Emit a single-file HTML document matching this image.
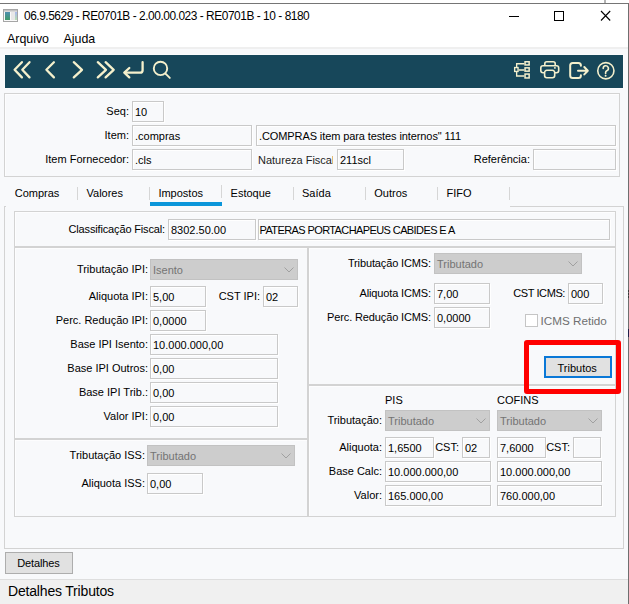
<!DOCTYPE html>
<html><head><meta charset="utf-8"><style>
html,body{margin:0;padding:0;width:629px;height:604px;overflow:hidden;background:#fff;}
body{position:relative;font-family:"Liberation Sans",sans-serif;}
body>div,body>svg{position:absolute;}
.t{white-space:nowrap;}
</style></head><body>
<div style="left:0px;top:0px;width:629px;height:604px;background:#fff;"></div>
<div style="left:604px;top:0px;width:2px;height:3px;background:#b4b4b4;"></div>
<div style="left:0px;top:3px;width:629px;height:1px;background:#757575;"></div>
<div style="left:628px;top:3px;width:1px;height:601px;background:#6f6f6f;"></div>
<svg style="left:3px;top:9px" width="15" height="13" viewBox="0 0 15 13"><defs><linearGradient id="g1" x1="0" y1="0" x2="0" y2="1"><stop offset="0" stop-color="#4f8fb0"/><stop offset="1" stop-color="#3f9a6a"/></linearGradient><linearGradient id="g2" x1="0" y1="0" x2="0" y2="1"><stop offset="0" stop-color="#a9b8f0"/><stop offset="1" stop-color="#b8e0b0"/></linearGradient></defs><rect x="0.5" y="0.5" width="14" height="12" fill="#fafafa" stroke="#a6a6a6"/><rect x="1" y="1" width="13" height="1.6" fill="#c4c4c4"/><rect x="2" y="3" width="5" height="8" fill="url(#g1)"/><rect x="8" y="3" width="4" height="8" fill="#e8e8e8"/><rect x="12" y="3" width="2" height="8" fill="url(#g2)"/></svg>
<div class="t" style="left:24px;top:10.04px;font-size:11.9px;line-height:13.68px;color:#000;letter-spacing:-0.45px;">06.9.5629 - RE0701B - 2.00.00.023 - RE0701B - 10 - 8180</div>
<div style="left:509px;top:16px;width:10px;height:1px;background:#000;"></div>
<div style="left:554px;top:11px;width:10px;height:10px;border:1px solid #000;box-sizing:border-box;"></div>
<svg style="left:600px;top:10px" width="12" height="12" viewBox="0 0 12 12"><path d="M1 1 L10.2 10.5 M10.2 1 L1 10.5" stroke="#000" stroke-width="1.1"/></svg>
<div class="t" style="left:7px;top:31.57px;font-size:12.4px;line-height:14.26px;color:#000;">Arquivo</div>
<div class="t" style="left:63.5px;top:31.57px;font-size:12.4px;line-height:14.26px;color:#000;">Ajuda</div>
<div style="left:0px;top:47px;width:628px;height:2px;background:#efefef;"></div>
<div style="left:0px;top:49px;width:628px;height:530px;background:#f8f9fb;"></div>
<div style="left:4px;top:54px;width:620px;height:35px;background:#fbfcfd;"></div>
<div style="left:5px;top:55px;width:618px;height:33px;background:#17475a;"></div>
<svg style="left:0;top:0" width="629" height="100" viewBox="0 0 629 100">
<g fill="none" stroke="#f5f0cc" stroke-width="2.3" stroke-linecap="round" stroke-linejoin="round">
<path d="M21.9 62.2 L14.6 69.8 L21.9 77.4"/>
<path d="M29.5 62.2 L22.3 69.8 L29.5 77.4"/>
<path d="M53.9 62.2 L46.4 69.8 L53.9 77.4"/>
<path d="M73.8 62.2 L82 69.8 L73.8 77.4"/>
<path d="M97.8 62.2 L106 69.8 L97.8 77.4"/>
<path d="M105.6 62.2 L113.7 69.8 L105.6 77.4"/>
</g>
<g fill="none" stroke="#f5f0cc" stroke-width="2.3" stroke-linecap="round" stroke-linejoin="round">
<path d="M142.6 62.2 V70.2 a2.5 2.5 0 0 1 -2.5 2.5 H125"/>
<path d="M129.3 68 L124.3 72.7 L129.3 77.4"/>
</g>
<g fill="none" stroke="#f5f0cc" stroke-width="1.9" stroke-linecap="round">
<circle cx="160.5" cy="68.4" r="6.7"/>
<path d="M165.5 73.6 L169.8 77.9"/>
</g>
<g fill="none" stroke="#f5f0cc" stroke-width="1.35">
<rect x="514.65" y="67.55" width="3.4" height="3.9"/>
<rect x="525.05" y="61.75" width="4.1" height="3.2" stroke-width="1.5"/>
<rect x="525.05" y="67.85" width="4.1" height="3.3" stroke-width="1.5"/>
<rect x="525.05" y="74.05" width="4.1" height="3.9" stroke-width="1.5"/>
<path d="M516.65 66.9 V63.7 H524.3 M516.65 72.1 V76 H524.3 M518.7 70 H524.3"/>
</g>
<g fill="none" stroke="#f5f0cc" stroke-width="1.6" stroke-linejoin="round">
<path d="M544.8 65.8 V63.8 a2 2 0 0 1 2 -2 H553.2 a2 2 0 0 1 2 2 V65.8"/>
<path d="M544.6 72.7 H543 a2.2 2.2 0 0 1 -2.2 -2.2 V68 a2.2 2.2 0 0 1 2.2 -2.2 H556.5 a2.2 2.2 0 0 1 2.2 2.2 V70.5 a2.2 2.2 0 0 1 -2.2 2.2 H554.7"/>
<path d="M546.8 70.3 H552.5 a2.2 2.2 0 0 1 2.2 2.2 V75.5 a2.2 2.2 0 0 1 -2.2 2.2 H546.8 a2.2 2.2 0 0 1 -2.2 -2.2 V72.5 a2.2 2.2 0 0 1 2.2 -2.2 Z"/>
</g>
<rect x="554.1" y="67.1" width="1.6" height="1.6" fill="#f5f0cc"/>
<g fill="none" stroke="#f5f0cc" stroke-width="2" stroke-linecap="round" stroke-linejoin="round">
<path d="M580.9 65.8 V65.5 a2.5 2.5 0 0 0 -2.5 -2.5 H572.7 a2.5 2.5 0 0 0 -2.5 2.5 V75.5 a2.5 2.5 0 0 0 2.5 2.5 H578.4 a2.5 2.5 0 0 0 2.5 -2.5 V75.2"/>
<path d="M578 70.7 H587.3 M584.3 67 L587.8 70.7 L584.3 74.4"/>
</g>
<g fill="none" stroke="#f5f0cc" stroke-width="1.6" stroke-linecap="round">
<circle cx="605.85" cy="70.75" r="8.1"/>
<path d="M603.2 68.4 a2.6 2.6 0 1 1 3.6 2.4 c-0.8 0.4 -1.2 0.9 -1.2 1.7 v0.9"/>
</g>
<circle cx="605.6" cy="75.7" r="1" fill="#f5f0cc"/>
</svg>
<div style="left:4px;top:93px;width:616px;height:84px;border:1px solid #d3d3d3;box-sizing:border-box;box-shadow:inset 1px 1px 0 #fdfdfe;"></div>
<div class="t" style="right:500px;top:104.86px;font-size:11px;line-height:12.65px;color:#000;text-align:right;">Seq:</div>
<div style="left:132px;top:101px;width:32px;height:21px;border:1px solid #c9c9c9;box-sizing:border-box;background:#f8f9fb;box-shadow:inset 1px 1px 0 #fff, 1px 1px 0 #fff;"></div>
<div class="t" style="left:135px;top:105.86px;font-size:11px;line-height:12.65px;color:#000;">10</div>
<div class="t" style="right:500px;top:128.86px;font-size:11px;line-height:12.65px;color:#000;text-align:right;">Item:</div>
<div style="left:132px;top:125px;width:120px;height:21px;border:1px solid #c9c9c9;box-sizing:border-box;background:#f8f9fb;box-shadow:inset 1px 1px 0 #fff, 1px 1px 0 #fff;"></div>
<div class="t" style="left:135px;top:129.86px;font-size:11px;line-height:12.65px;color:#000;">.compras</div>
<div style="left:256px;top:125px;width:360px;height:21px;border:1px solid #c9c9c9;box-sizing:border-box;background:#f8f9fb;box-shadow:inset 1px 1px 0 #fff, 1px 1px 0 #fff;"></div>
<div class="t" style="left:259px;top:129.86px;font-size:11px;line-height:12.65px;color:#000;letter-spacing:-0.1px;">.COMPRAS item para testes internos" 111</div>
<div class="t" style="right:500px;top:152.86px;font-size:11px;line-height:12.65px;color:#000;text-align:right;">Item Fornecedor:</div>
<div style="left:132px;top:149px;width:120px;height:21px;border:1px solid #c9c9c9;box-sizing:border-box;background:#f8f9fb;box-shadow:inset 1px 1px 0 #fff, 1px 1px 0 #fff;"></div>
<div class="t" style="left:135px;top:153.86px;font-size:11px;line-height:12.65px;color:#000;">.cls</div>
<div class="t" style="left:258px;top:150px;width:75px;height:19px;overflow:hidden;font-size:11px;line-height:20px;color:#1e1e1e;white-space:nowrap">Natureza Fiscal:</div>
<div style="left:337px;top:149px;width:67px;height:21px;border:1px solid #c9c9c9;box-sizing:border-box;background:#f8f9fb;box-shadow:inset 1px 1px 0 #fff, 1px 1px 0 #fff;"></div>
<div class="t" style="left:340px;top:153.86px;font-size:11px;line-height:12.65px;color:#000;">211scl</div>
<div class="t" style="right:99px;top:152.86px;font-size:11px;line-height:12.65px;color:#000;text-align:right;">Referência:</div>
<div style="left:533px;top:149px;width:83px;height:21px;border:1px solid #c9c9c9;box-sizing:border-box;background:#f8f9fb;box-shadow:inset 1px 1px 0 #fff, 1px 1px 0 #fff;"></div>
<div class="t" style="left:14.7px;top:186.86px;font-size:11px;line-height:12.65px;color:#000;">Compras</div>
<div class="t" style="left:86.5px;top:186.86px;font-size:11px;line-height:12.65px;color:#000;">Valores</div>
<div class="t" style="left:158.4px;top:186.86px;font-size:11px;line-height:12.65px;color:#000;">Impostos</div>
<div class="t" style="left:230.6px;top:186.86px;font-size:11px;line-height:12.65px;color:#000;">Estoque</div>
<div class="t" style="left:302px;top:186.86px;font-size:11px;line-height:12.65px;color:#000;">Saída</div>
<div class="t" style="left:374.3px;top:186.86px;font-size:11px;line-height:12.65px;color:#000;">Outros</div>
<div class="t" style="left:446.5px;top:186.86px;font-size:11px;line-height:12.65px;color:#000;">FIFO</div>
<div style="left:77px;top:187px;width:1px;height:13px;background:#d6d6d6;"></div>
<div style="left:149px;top:187px;width:1px;height:13px;background:#d6d6d6;"></div>
<div style="left:293px;top:187px;width:1px;height:13px;background:#d6d6d6;"></div>
<div style="left:365px;top:187px;width:1px;height:13px;background:#d6d6d6;"></div>
<div style="left:437px;top:187px;width:1px;height:13px;background:#d6d6d6;"></div>
<div style="left:509px;top:187px;width:1px;height:13px;background:#d6d6d6;"></div>
<div style="left:221px;top:185px;width:1px;height:13px;background:#d6d6d6;"></div>
<div style="left:150px;top:202px;width:72px;height:4px;background:#0b96da;"></div>
<div style="left:4px;top:206px;width:620px;height:343px;border:1px solid #d3d3d3;border-top:none;box-sizing:border-box;"></div>
<div style="left:4px;top:206px;width:2px;height:1px;background:#d3d3d3;"></div>
<div style="left:510px;top:206px;width:114px;height:1px;background:#d3d3d3;"></div>
<div style="left:14px;top:211px;width:602px;height:36px;border:1px solid #d3d3d3;box-sizing:border-box;box-shadow:inset 1px 1px 0 #fdfdfe;"></div>
<div class="t" style="right:464px;top:222.86px;font-size:11px;line-height:12.65px;color:#000;text-align:right;letter-spacing:-0.15px;">Classificação Fiscal:</div>
<div style="left:168px;top:219px;width:88px;height:21px;border:1px solid #c9c9c9;box-sizing:border-box;background:#f8f9fb;box-shadow:inset 1px 1px 0 #fff, 1px 1px 0 #fff;"></div>
<div class="t" style="left:171px;top:223.86px;font-size:11px;line-height:12.65px;color:#000;">8302.50.00</div>
<div style="left:258px;top:219px;width:352px;height:21px;border:1px solid #c9c9c9;box-sizing:border-box;background:#f8f9fb;box-shadow:inset 1px 1px 0 #fff, 1px 1px 0 #fff;"></div>
<div class="t" style="left:259.5px;top:223.86px;font-size:11px;line-height:12.65px;color:#000;letter-spacing:-0.6px;">PATERAS PORTACHAPEUS CABIDES E A</div>
<div style="left:14px;top:247px;width:294px;height:192px;border:1px solid #d3d3d3;box-sizing:border-box;box-shadow:inset 1px 1px 0 #fdfdfe;"></div>
<div class="t" style="right:481px;top:262.86px;font-size:11px;line-height:12.65px;color:#000;text-align:right;">Tributação IPI:</div>
<div style="left:150px;top:259px;width:148px;height:21px;border:1px solid #c2c2c2;box-sizing:border-box;background:#cdcdcd;"></div>
<div class="t" style="left:153px;top:263.86px;font-size:11px;line-height:12.65px;color:#747474;">Isento</div>
<svg style="left:284px;top:265.5px" width="10" height="8" viewBox="0 0 10 8"><path d="M0.5 1.5 L5 6 L9.5 1.5" fill="none" stroke="#a0a0a0" stroke-width="1"/></svg>
<div class="t" style="right:481px;top:289.86px;font-size:11px;line-height:12.65px;color:#000;text-align:right;">Aliquota IPI:</div>
<div style="left:150px;top:286px;width:56px;height:21px;border:1px solid #c9c9c9;box-sizing:border-box;background:#f8f9fb;box-shadow:inset 1px 1px 0 #fff, 1px 1px 0 #fff;"></div>
<div class="t" style="left:153px;top:290.86px;font-size:11px;line-height:12.65px;color:#000;">5,00</div>
<div class="t" style="right:369px;top:289.86px;font-size:11px;line-height:12.65px;color:#000;text-align:right;">CST IPI:</div>
<div style="left:263px;top:286px;width:35px;height:21px;border:1px solid #c9c9c9;box-sizing:border-box;background:#f8f9fb;box-shadow:inset 1px 1px 0 #fff, 1px 1px 0 #fff;"></div>
<div class="t" style="left:266px;top:290.86px;font-size:11px;line-height:12.65px;color:#000;">02</div>
<div class="t" style="right:481px;top:313.86px;font-size:11px;line-height:12.65px;color:#000;text-align:right;">Perc. Redução IPI:</div>
<div style="left:150px;top:310px;width:56px;height:21px;border:1px solid #c9c9c9;box-sizing:border-box;background:#f8f9fb;box-shadow:inset 1px 1px 0 #fff, 1px 1px 0 #fff;"></div>
<div class="t" style="left:153px;top:314.86px;font-size:11px;line-height:12.65px;color:#000;">0,0000</div>
<div class="t" style="right:481px;top:337.86px;font-size:11px;line-height:12.65px;color:#000;text-align:right;">Base IPI Isento:</div>
<div style="left:150px;top:334px;width:128px;height:21px;border:1px solid #c9c9c9;box-sizing:border-box;background:#f8f9fb;box-shadow:inset 1px 1px 0 #fff, 1px 1px 0 #fff;"></div>
<div class="t" style="left:153px;top:338.86px;font-size:11px;line-height:12.65px;color:#000;">10.000.000,00</div>
<div class="t" style="right:481px;top:361.86px;font-size:11px;line-height:12.65px;color:#000;text-align:right;">Base IPI Outros:</div>
<div style="left:150px;top:358px;width:128px;height:21px;border:1px solid #c9c9c9;box-sizing:border-box;background:#f8f9fb;box-shadow:inset 1px 1px 0 #fff, 1px 1px 0 #fff;"></div>
<div class="t" style="left:153px;top:362.86px;font-size:11px;line-height:12.65px;color:#000;">0,00</div>
<div class="t" style="right:481px;top:385.86px;font-size:11px;line-height:12.65px;color:#000;text-align:right;">Base IPI Trib.:</div>
<div style="left:150px;top:382px;width:128px;height:21px;border:1px solid #c9c9c9;box-sizing:border-box;background:#f8f9fb;box-shadow:inset 1px 1px 0 #fff, 1px 1px 0 #fff;"></div>
<div class="t" style="left:153px;top:386.86px;font-size:11px;line-height:12.65px;color:#000;">0,00</div>
<div class="t" style="right:481px;top:409.86px;font-size:11px;line-height:12.65px;color:#000;text-align:right;">Valor IPI:</div>
<div style="left:150px;top:406px;width:128px;height:21px;border:1px solid #c9c9c9;box-sizing:border-box;background:#f8f9fb;box-shadow:inset 1px 1px 0 #fff, 1px 1px 0 #fff;"></div>
<div class="t" style="left:153px;top:410.86px;font-size:11px;line-height:12.65px;color:#000;">0,00</div>
<div style="left:14px;top:439px;width:294px;height:78px;border:1px solid #d3d3d3;box-sizing:border-box;box-shadow:inset 1px 1px 0 #fdfdfe;"></div>
<div class="t" style="right:484px;top:448.86px;font-size:11px;line-height:12.65px;color:#000;text-align:right;">Tributação ISS:</div>
<div style="left:147px;top:445px;width:148px;height:21px;border:1px solid #c2c2c2;box-sizing:border-box;background:#cdcdcd;"></div>
<div class="t" style="left:150px;top:449.86px;font-size:11px;line-height:12.65px;color:#747474;">Tributado</div>
<svg style="left:281px;top:451.5px" width="10" height="8" viewBox="0 0 10 8"><path d="M0.5 1.5 L5 6 L9.5 1.5" fill="none" stroke="#a0a0a0" stroke-width="1"/></svg>
<div class="t" style="right:484px;top:476.86px;font-size:11px;line-height:12.65px;color:#000;text-align:right;">Aliquota ISS:</div>
<div style="left:147px;top:473px;width:56px;height:21px;border:1px solid #c9c9c9;box-sizing:border-box;background:#f8f9fb;box-shadow:inset 1px 1px 0 #fff, 1px 1px 0 #fff;"></div>
<div class="t" style="left:150px;top:477.86px;font-size:11px;line-height:12.65px;color:#000;">0,00</div>
<div style="left:308px;top:247px;width:308px;height:138px;border:1px solid #d3d3d3;box-sizing:border-box;box-shadow:inset 1px 1px 0 #fdfdfe;"></div>
<div class="t" style="right:198px;top:256.86px;font-size:11px;line-height:12.65px;color:#000;text-align:right;letter-spacing:-0.13px;">Tributação ICMS:</div>
<div style="left:434px;top:253px;width:148px;height:21px;border:1px solid #c2c2c2;box-sizing:border-box;background:#cdcdcd;"></div>
<div class="t" style="left:437px;top:257.86px;font-size:11px;line-height:12.65px;color:#747474;">Tributado</div>
<svg style="left:568px;top:259.5px" width="10" height="8" viewBox="0 0 10 8"><path d="M0.5 1.5 L5 6 L9.5 1.5" fill="none" stroke="#a0a0a0" stroke-width="1"/></svg>
<div class="t" style="right:198px;top:286.86px;font-size:11px;line-height:12.65px;color:#000;text-align:right;letter-spacing:-0.13px;">Aliquota ICMS:</div>
<div style="left:434px;top:283px;width:56px;height:21px;border:1px solid #c9c9c9;box-sizing:border-box;background:#f8f9fb;box-shadow:inset 1px 1px 0 #fff, 1px 1px 0 #fff;"></div>
<div class="t" style="left:437px;top:287.86px;font-size:11px;line-height:12.65px;color:#000;">7,00</div>
<div class="t" style="right:64px;top:286.86px;font-size:11px;line-height:12.65px;color:#000;text-align:right;letter-spacing:-0.4px;">CST ICMS:</div>
<div style="left:568px;top:283px;width:35px;height:21px;border:1px solid #c9c9c9;box-sizing:border-box;background:#f8f9fb;box-shadow:inset 1px 1px 0 #fff, 1px 1px 0 #fff;"></div>
<div class="t" style="left:571px;top:287.86px;font-size:11px;line-height:12.65px;color:#000;">000</div>
<div class="t" style="right:198px;top:310.86px;font-size:11px;line-height:12.65px;color:#000;text-align:right;letter-spacing:-0.13px;">Perc. Redução ICMS:</div>
<div style="left:434px;top:307px;width:56px;height:21px;border:1px solid #c9c9c9;box-sizing:border-box;background:#f8f9fb;box-shadow:inset 1px 1px 0 #fff, 1px 1px 0 #fff;"></div>
<div class="t" style="left:437px;top:311.86px;font-size:11px;line-height:12.65px;color:#000;">0,0000</div>
<div style="left:525px;top:314px;width:13px;height:13px;border:1px solid #c5c5c5;box-sizing:border-box;background:#fff;"></div>
<div class="t" style="left:540.5px;top:314.22px;font-size:11.7px;line-height:13.45px;color:#707070;">ICMS Retido</div>
<div style="left:544px;top:356px;width:68px;height:22px;border:2px solid #0a78d7;box-sizing:border-box;background:#e1e1e1;"></div>
<div class="t" style="left:557.5px;top:361.86px;font-size:11px;line-height:12.65px;color:#000;">Tributos</div>
<div style="left:308px;top:385px;width:308px;height:132px;border:1px solid #d3d3d3;box-sizing:border-box;box-shadow:inset 1px 1px 0 #fdfdfe;"></div>
<div class="t" style="left:385px;top:393.86px;font-size:11px;line-height:12.65px;color:#000;">PIS</div>
<div class="t" style="left:497px;top:393.86px;font-size:11px;line-height:12.65px;color:#000;">COFINS</div>
<div class="t" style="right:247px;top:413.86px;font-size:11px;line-height:12.65px;color:#000;text-align:right;">Tributação:</div>
<div style="left:385px;top:410px;width:105px;height:21px;border:1px solid #c2c2c2;box-sizing:border-box;background:#cdcdcd;"></div>
<div class="t" style="left:388px;top:414.86px;font-size:11px;line-height:12.65px;color:#747474;">Tributado</div>
<svg style="left:476px;top:416.5px" width="10" height="8" viewBox="0 0 10 8"><path d="M0.5 1.5 L5 6 L9.5 1.5" fill="none" stroke="#a0a0a0" stroke-width="1"/></svg>
<div style="left:497px;top:410px;width:105px;height:21px;border:1px solid #c2c2c2;box-sizing:border-box;background:#cdcdcd;"></div>
<div class="t" style="left:500px;top:414.86px;font-size:11px;line-height:12.65px;color:#747474;">Tributado</div>
<svg style="left:588px;top:416.5px" width="10" height="8" viewBox="0 0 10 8"><path d="M0.5 1.5 L5 6 L9.5 1.5" fill="none" stroke="#a0a0a0" stroke-width="1"/></svg>
<div class="t" style="right:247px;top:440.86px;font-size:11px;line-height:12.65px;color:#000;text-align:right;">Aliquota:</div>
<div style="left:385px;top:437px;width:49px;height:21px;border:1px solid #c9c9c9;box-sizing:border-box;background:#f8f9fb;box-shadow:inset 1px 1px 0 #fff, 1px 1px 0 #fff;"></div>
<div class="t" style="left:388px;top:441.86px;font-size:11px;line-height:12.65px;color:#000;">1,6500</div>
<div class="t" style="right:170px;top:440.86px;font-size:11px;line-height:12.65px;color:#000;text-align:right;">CST:</div>
<div style="left:462px;top:437px;width:28px;height:21px;border:1px solid #c9c9c9;box-sizing:border-box;background:#f8f9fb;box-shadow:inset 1px 1px 0 #fff, 1px 1px 0 #fff;"></div>
<div class="t" style="left:465px;top:441.86px;font-size:11px;line-height:12.65px;color:#000;">02</div>
<div style="left:497px;top:437px;width:49px;height:21px;border:1px solid #c9c9c9;box-sizing:border-box;background:#f8f9fb;box-shadow:inset 1px 1px 0 #fff, 1px 1px 0 #fff;"></div>
<div class="t" style="left:500px;top:441.86px;font-size:11px;line-height:12.65px;color:#000;">7,6000</div>
<div class="t" style="right:59px;top:440.86px;font-size:11px;line-height:12.65px;color:#000;text-align:right;">CST:</div>
<div style="left:573px;top:437px;width:28px;height:21px;border:1px solid #c9c9c9;box-sizing:border-box;background:#f8f9fb;box-shadow:inset 1px 1px 0 #fff, 1px 1px 0 #fff;"></div>
<div class="t" style="right:247px;top:464.86px;font-size:11px;line-height:12.65px;color:#000;text-align:right;">Base Calc:</div>
<div style="left:385px;top:461px;width:106px;height:21px;border:1px solid #c9c9c9;box-sizing:border-box;background:#f8f9fb;box-shadow:inset 1px 1px 0 #fff, 1px 1px 0 #fff;"></div>
<div class="t" style="left:388px;top:465.86px;font-size:11px;line-height:12.65px;color:#000;">10.000.000,00</div>
<div style="left:497px;top:461px;width:105px;height:21px;border:1px solid #c9c9c9;box-sizing:border-box;background:#f8f9fb;box-shadow:inset 1px 1px 0 #fff, 1px 1px 0 #fff;"></div>
<div class="t" style="left:500px;top:465.86px;font-size:11px;line-height:12.65px;color:#000;">10.000.000,00</div>
<div class="t" style="right:247px;top:488.86px;font-size:11px;line-height:12.65px;color:#000;text-align:right;">Valor:</div>
<div style="left:385px;top:485px;width:106px;height:21px;border:1px solid #c9c9c9;box-sizing:border-box;background:#f8f9fb;box-shadow:inset 1px 1px 0 #fff, 1px 1px 0 #fff;"></div>
<div class="t" style="left:388px;top:489.86px;font-size:11px;line-height:12.65px;color:#000;">165.000,00</div>
<div style="left:497px;top:485px;width:105px;height:21px;border:1px solid #c9c9c9;box-sizing:border-box;background:#f8f9fb;box-shadow:inset 1px 1px 0 #fff, 1px 1px 0 #fff;"></div>
<div class="t" style="left:500px;top:489.86px;font-size:11px;line-height:12.65px;color:#000;">760.000,00</div>
<div style="left:628px;top:290px;width:1px;height:2px;background:#3a3a3a;"></div>
<div style="left:628px;top:293px;width:1px;height:2px;background:#3a3a3a;"></div>
<div style="left:628px;top:296px;width:1px;height:2px;background:#3a3a3a;"></div>
<div style="left:628px;top:329px;width:1px;height:8px;background:#20204a;"></div>
<div style="left:524px;top:340px;width:97px;height:54px;border:5px solid #ff0000;box-sizing:border-box;border-radius:3px;"></div>
<div style="left:5px;top:552px;width:68px;height:22px;border:1px solid #adadad;box-sizing:border-box;background:#e1e1e1;"></div>
<div class="t" style="left:17.3px;top:556.86px;font-size:11px;line-height:12.65px;color:#000;letter-spacing:-0.15px;">Detalhes</div>
<div style="left:0px;top:579px;width:628px;height:1px;background:#dedede;"></div>
<div style="left:0px;top:580px;width:628px;height:24px;background:#f0f0f0;"></div>
<div class="t" style="left:8px;top:583.10px;font-size:14px;line-height:16.1px;color:#000;letter-spacing:-0.18px;">Detalhes Tributos</div>
</body></html>
